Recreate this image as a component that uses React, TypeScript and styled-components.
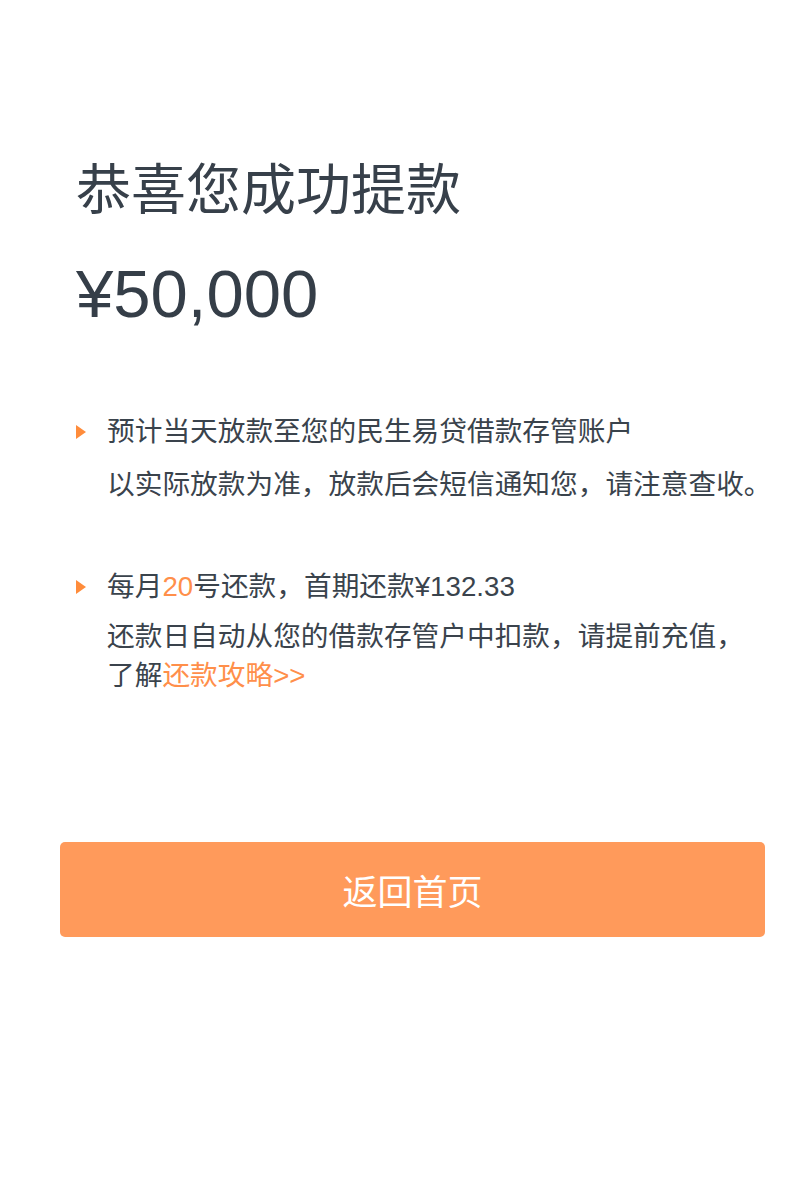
import React from "react";
import styled, { createGlobalStyle } from "styled-components";

const Global = createGlobalStyle`
  html, body { margin: 0; padding: 0; background: #ffffff; }
  body { font-family: "Liberation Sans", "Noto Sans CJK SC", sans-serif; color: #353e48; }
`;

const Page = styled.div`
  width: 810px;
  min-height: 1203px;
  box-sizing: border-box;
  padding: 158px 45px 0 60px;
  display: flex;
  flex-direction: column;
`;

const Intro = styled.div`
  padding-left: 16px;
  display: flex;
  flex-direction: column;
`;

const Title = styled.h1`
  margin: 0;
  font-family: "Noto Sans CJK SC", sans-serif;
  font-weight: 400;
  font-size: 55px;
  line-height: 55px;
  color: #37404a;
`;

const Amount = styled.div`
  margin-top: 47px;
  font-family: "Liberation Sans", sans-serif;
  font-size: 67px;
  line-height: 67px;
  color: #353e48;
`;

const List = styled.ul`
  list-style: none;
  margin: 85px -30px 0 0;
  padding: 0 0 0 16px;
  display: flex;
  flex-direction: column;
  gap: 63px;
`;

const Item = styled.li`
  display: grid;
  grid-template-columns: 31px 1fr;
  align-items: start;
`;

const Marker = styled.span`
  margin-top: 13px;
  width: 0;
  height: 0;
  border-top: 7px solid transparent;
  border-bottom: 7px solid transparent;
  border-left: 10px solid #ff8c3b;
`;

const Text = styled.div`
  font-size: 27.7px;
  color: #3a434c;
`;

const Head = styled.div`
  line-height: 39px;
  white-space: nowrap;
`;

const Body = styled.div<{ $gap: number }>`
  margin-top: ${(p) => p.$gap}px;
  line-height: 39px;
`;

const Accent = styled.span`
  color: #ff8f4a;
`;

const Button = styled.button`
  margin-top: 147px;
  width: 705px;
  height: 95px;
  border: none;
  border-radius: 5px;
  background: #ff9a5b;
  color: #ffffff;
  font-family: "Noto Sans CJK SC", sans-serif;
  font-size: 35px;
  cursor: pointer;
  padding: 0;
`;

export default function App() {
  return (
    <>
      <Global />
      <Page>
        <Intro>
          <Title>恭喜您成功提款</Title>
          <Amount>¥50,000</Amount>
        </Intro>
        <List>
          <Item>
            <Marker />
            <Text>
              <Head>预计当天放款至您的民生易贷借款存管账户</Head>
              <Body $gap={14}>以实际放款为准，放款后会短信通知您，请注意查收。</Body>
            </Text>
          </Item>
          <Item>
            <Marker />
            <Text>
              <Head>
                每月<Accent>20</Accent>号还款，首期还款¥132.33
              </Head>
              <Body $gap={11}>
                还款日自动从您的借款存管户中扣款，请提前充值，
                <br />
                了解<Accent>还款攻略&gt;&gt;</Accent>
              </Body>
            </Text>
          </Item>
        </List>
        <Button>返回首页</Button>
      </Page>
    </>
  );
}
